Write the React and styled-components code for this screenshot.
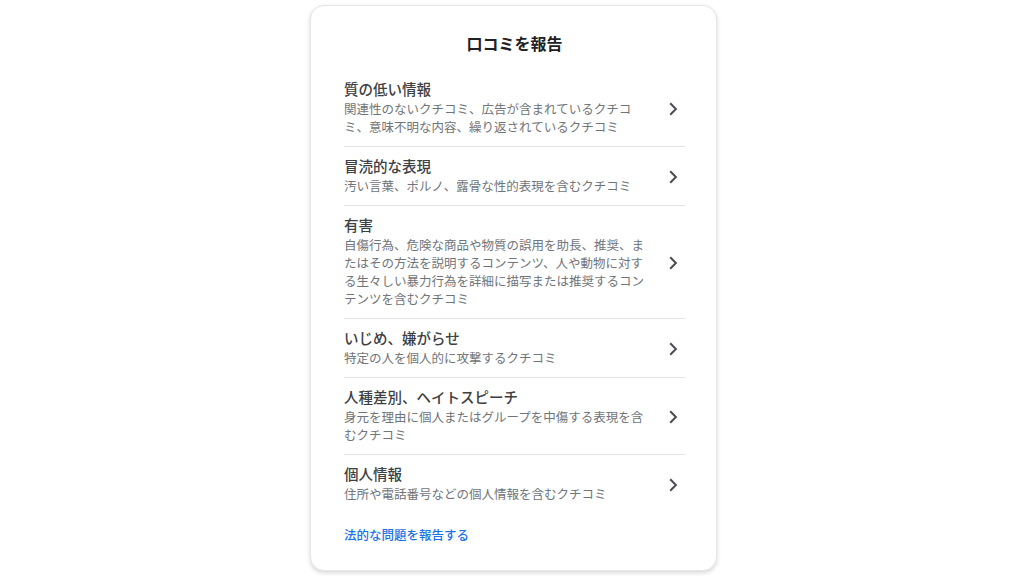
import React from 'react'
import styled, { createGlobalStyle } from 'styled-components'

const GlobalStyle = createGlobalStyle`
  html, body {
    margin: 0;
    padding: 0;
    background: #ffffff;
  }
  body {
    font-family: Roboto, "Noto Sans CJK JP", "Noto Sans", sans-serif;
    -webkit-font-smoothing: antialiased;
  }
`

const items = [
  {
    title: '質の低い情報',
    desc: '関連性のないクチコミ、広告が含まれているクチコミ、意味不明な内容、繰り返されているクチコミ',
  },
  {
    title: '冒涜的な表現',
    desc: '汚い言葉、ポルノ、露骨な性的表現を含むクチコミ',
  },
  {
    title: '有害',
    desc: '自傷行為、危険な商品や物質の誤用を助長、推奨、またはその方法を説明するコンテンツ、人や動物に対する生々しい暴力行為を詳細に描写または推奨するコンテンツを含むクチコミ',
  },
  {
    title: 'いじめ、嫌がらせ',
    desc: '特定の人を個人的に攻撃するクチコミ',
  },
  {
    title: '人種差別、ヘイトスピーチ',
    desc: '身元を理由に個人またはグループを中傷する表現を含むクチコミ',
  },
  {
    title: '個人情報',
    desc: '住所や電話番号などの個人情報を含むクチコミ',
  },
]

const Chevron = () => (
  <svg width="24" height="24" viewBox="0 0 24 24" aria-hidden="true">
    <path d="M9.2 6.3 14.9 12l-5.7 5.7" fill="none" stroke="#4a4d51" strokeWidth="2" />
  </svg>
)

const App = () => (
  <>
    <GlobalStyle />
    <Page>
      <Card>
        <Heading>口コミを報告</Heading>
        <List>
          {items.map((item) => (
            <Row key={item.title}>
              <Texts>
                <RowTitle>{item.title}</RowTitle>
                <RowDesc>{item.desc}</RowDesc>
              </Texts>
              <Chevron />
            </Row>
          ))}
        </List>
        <LegalLink href="#">法的な問題を報告する</LegalLink>
      </Card>
    </Page>
  </>
)

export default App

const Page = styled.div`
  display: flex;
  justify-content: center;
  padding-top: 5px;
  height: 571px;
`

const Card = styled.div`
  box-sizing: border-box;
  width: 407px;
  height: 566px;
  margin-left: 3px;
  padding: 27px 31px 0 33px;
  background: #fff;
  border: 1px solid #e6e6e6;
  border-radius: 14px;
  box-shadow: 0 2px 4px rgba(60, 64, 67, 0.2);
  display: flex;
  flex-direction: column;
`

const Heading = styled.h1`
  margin: 0 0 13px;
  text-align: center;
  font-size: 16px;
  line-height: 24px;
  font-weight: 700;
  color: #202124;
`

const List = styled.div`
  display: flex;
  flex-direction: column;
`

const Row = styled.div`
  display: flex;
  align-items: center;
  justify-content: space-between;
  padding: 11px 0 9px;
  border-bottom: 1px solid #e3e3e3;
  cursor: pointer;

  &:last-child {
    border-bottom: none;
  }
`

const Texts = styled.div`
  width: 306px;
  display: flex;
  flex-direction: column;
`

const RowTitle = styled.div`
  font-size: 14.5px;
  line-height: 20px;
  font-weight: 500;
  color: #3c4043;
`

const RowDesc = styled.div`
  font-size: 12.5px;
  line-height: 18px;
  color: #70757a;
`

const LegalLink = styled.a`
  margin-top: 14px;
  font-size: 12.5px;
  line-height: 18px;
  font-weight: 500;
  color: #1a73e8;
  text-decoration: none;
`
